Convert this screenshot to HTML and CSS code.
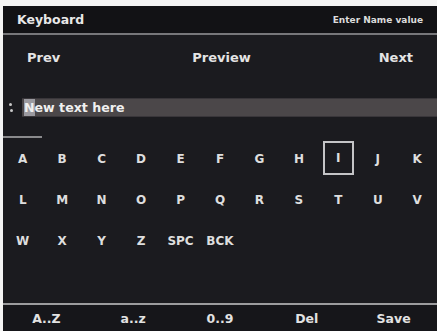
FILE: index.html
```html
<!DOCTYPE html>
<html>
<head>
<meta charset="utf-8">
<link rel="stylesheet" href="styles.css">
</head>
<body>
<div class="screen">
  <div class="header">
    <span class="title">Keyboard</span>
    <span class="hint">Enter Name value</span>
  </div>
  <div class="nav">
    <span class="nav-prev">Prev</span>
    <span class="nav-mid">Preview</span>
    <span class="nav-next">Next</span>
  </div>
  <div class="main">
    <div class="field-row">
      <span class="dots"><i></i><i></i></span>
      <div class="field"><span class="cursor">N</span>ew text here</div>
    </div>
    <div class="underline"></div>
    <div class="keys">
      <span class="key">A</span><span class="key">B</span><span class="key">C</span><span class="key">D</span><span class="key">E</span><span class="key">F</span><span class="key">G</span><span class="key">H</span><span class="key sel">I</span><span class="key">J</span><span class="key">K</span>
      <span class="key">L</span><span class="key">M</span><span class="key">N</span><span class="key">O</span><span class="key">P</span><span class="key">Q</span><span class="key">R</span><span class="key">S</span><span class="key">T</span><span class="key">U</span><span class="key">V</span>
      <span class="key">W</span><span class="key">X</span><span class="key">Y</span><span class="key">Z</span><span class="key">SPC</span><span class="key">BCK</span>
    </div>
  </div>
  <div class="footer">
    <span>A..Z</span><span>a..z</span><span>0..9</span><span>Del</span><span>Save</span>
  </div>
</div>
</body>
</html>
```
FILE: styles.css
```css
html, body {
  margin: 0;
  padding: 0;
  background: #f4f4f4;
}
body {
  width: 437px;
  height: 331px;
  overflow: hidden;
  font-family: "DejaVu Sans", "Liberation Sans", sans-serif;
  font-weight: bold;
}
.screen {
  margin: 6px 0 0 3px;
  width: 434px;
  height: 325px;
  background: #1b1b1f;
  display: flex;
  flex-direction: column;
  color: #e4e4e4;
}
.header {
  height: 27px;
  flex: none;
  background: #121215;
  border-bottom: 2px solid #77777a;
  display: flex;
  align-items: center;
  justify-content: space-between;
  padding: 0 14px 0 14px;
  box-sizing: content-box;
}
.title {
  font-size: 12.5px;
  color: #e8e8e8;
}
.hint {
  font-size: 9px;
  color: #dcdcdc;
}
.nav {
  height: 45px;
  flex: none;
  display: flex;
  align-items: center;
  justify-content: space-between;
  padding: 0 24px 0 24px;
  font-size: 13px;
  position: relative;
}
.nav-mid {
  position: absolute;
  left: 0;
  right: 0;
  text-align: center;
  margin-left: 3px;
}
.main {
  flex: 1;
  display: flex;
  flex-direction: column;
}
.field-row {
  margin-top: 18px;
  height: 19px;
  display: flex;
  align-items: center;
}
.dots {
  width: 19px;
  height: 19px;
  display: flex;
  flex-direction: column;
  justify-content: center;
  gap: 3px;
  padding-left: 6px;
  box-sizing: border-box;
}
.dots i {
  display: block;
  width: 3px;
  height: 3px;
  border-radius: 50%;
  background: #c8c8c8;
}
.dots i:last-child {
  margin-left: 1px;
}
.field {
  flex: 1;
  height: 19px;
  background: #4b4749;
  border-top: 1px solid #39363a;
  border-bottom: 1px solid #39363a;
  box-sizing: border-box;
  font-size: 12.6px;
  line-height: 17px;
  padding-left: 2px;
  color: #f0f0f0;
}
.cursor {
  background: #9b9aa0;
  display: inline-block;
  line-height: 17px;
}
.underline {
  margin-top: 19px;
  width: 39px;
  height: 2px;
  background: #8a8a8c;
}
.keys {
  display: grid;
  grid-template-columns: repeat(11, 1fr);
  grid-auto-rows: 41px;
  font-size: 12px;
  color: #dedede;
}
.key {
  display: flex;
  align-items: center;
  justify-content: center;
  margin: 4px;
}
.key.sel {
  border: 2px solid #c4c4c6;
  margin: 3px 4px 4px 4px;
}
.footer {
  height: 26px;
  flex: none;
  background: #16161a;
  border-top: 2px solid #9c9c9e;
  display: grid;
  grid-template-columns: repeat(5, 1fr);
  align-items: center;
  font-size: 12.5px;
  color: #e2e2e2;
}
.footer span {
  text-align: center;
}
```
